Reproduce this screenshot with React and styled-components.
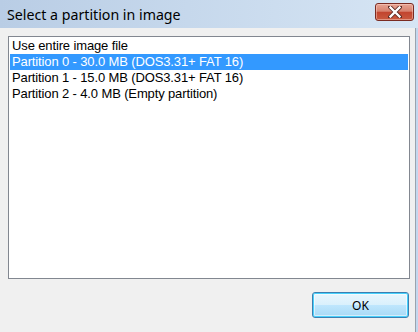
import React from "react";
import styled, { createGlobalStyle } from "styled-components";

const Global = createGlobalStyle`
  html, body { margin: 0; padding: 0; background: #f0f0f0; }
  body { width: 418px; height: 332px; overflow: hidden; }
`;

const Window = styled.div`
  width: 418px;
  height: 332px;
  display: flex;
  flex-direction: column;
  background: #f0f0f0;
`;

const TitleBar = styled.div`
  height: 28px;
  flex: none;
  display: flex;
  align-items: flex-start;
  justify-content: space-between;
  background: linear-gradient(90deg, #b9cde5 0%, #c6d8ec 45%, #d6e5f4 100%);
  box-sizing: border-box;
  padding: 0 4px 0 7px;
`;

const Title = styled.div`
  font-family: "Segoe UI", "Noto Sans", sans-serif;
  font-size: 14.2px;
  line-height: 15px;
  color: #000;
  padding-top: 7px;
`;

const CloseButton = styled.div`
  margin-top: 3px;
  width: 39px;
  height: 18px;
  box-sizing: border-box;
  border: 1px solid #7a2b22;
  border-radius: 3px;
  background: linear-gradient(180deg, #e8a594 0%, #d7826f 45%, #c2452f 52%, #c95a3f 100%);
  box-shadow: inset 0 0 0 1px rgba(255, 220, 210, 0.45);
  display: flex;
  align-items: center;
  justify-content: center;
`;

const Body = styled.div`
  flex: 1;
  display: flex;
`;

const Client = styled.div`
  flex: 1;
  display: flex;
  flex-direction: column;
  padding: 8px 5px 0 8px;
  background: #f0f0f0;
`;

const Frame = styled.div`
  width: 3px;
  flex: none;
  box-sizing: border-box;
  border-left: 1px solid #9aa3ad;
  background: #c3d7ee;
`;

const ListBox = styled.div`
  height: 243px;
  box-sizing: border-box;
  border: 1px solid #828790;
  background: #fff;
  padding: 1px 1px 0 1px;
`;

const Item = styled.div`
  height: 16px;
  line-height: 16px;
  padding-left: 2px;
  font-family: "Liberation Sans", Arial, sans-serif;
  font-size: 13px;
  letter-spacing: -0.13px;
  white-space: nowrap;
  color: ${(p) => (p.$selected ? "#fff" : "#000")};
  background: ${(p) => (p.$selected ? "#3399ff" : "transparent")};
`;

const Footer = styled.div`
  display: flex;
  justify-content: flex-end;
  padding: 13px 1px 0 0;
`;

const OkButton = styled.div`
  width: 97px;
  height: 26px;
  box-sizing: border-box;
  border: 1px solid #3c7fb1;
  border-radius: 3px;
  box-shadow: inset 0 0 0 1px #48d1fc, inset 0 0 0 2px rgba(255,255,255,0.5);
  background: linear-gradient(180deg, #eaf6fd 0%, #d9f0fc 50%, #bee6fd 51%, #a7d9f5 100%);
  display: flex;
  align-items: center;
  justify-content: center;
  font-family: "Segoe UI", "Noto Sans", sans-serif;
  font-size: 12px;
  color: #000;
`;

const items = [
  "Use entire image file",
  "Partition 0 - 30.0 MB (DOS3.31+ FAT 16)",
  "Partition 1 - 15.0 MB (DOS3.31+ FAT 16)",
  "Partition 2 - 4.0 MB (Empty partition)",
];

export default function App() {
  return (
    <>
      <Global />
      <Window>
        <TitleBar>
          <Title>Select a partition in image</Title>
          <CloseButton>
            <svg width="14" height="12" viewBox="0 0 14 12">
              <path
                d="M2 1 L12 11 M12 1 L2 11"
                stroke="#5a2a24"
                strokeWidth="4"
                strokeLinecap="square"
                fill="none"
              />
              <path
                d="M2.5 1.5 L11.5 10.5 M11.5 1.5 L2.5 10.5"
                stroke="#fff"
                strokeWidth="2.4"
                strokeLinecap="square"
                fill="none"
              />
            </svg>
          </CloseButton>
        </TitleBar>
        <Body>
          <Client>
            <ListBox>
              {items.map((t, i) => (
                <Item key={t} $selected={i === 1}>
                  {t}
                </Item>
              ))}
            </ListBox>
            <Footer>
              <OkButton>OK</OkButton>
            </Footer>
          </Client>
          <Frame />
        </Body>
      </Window>
    </>
  );
}
